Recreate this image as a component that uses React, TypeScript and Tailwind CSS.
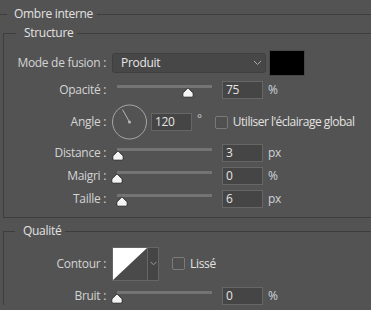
import React from "react";

const font = { fontFamily: '"Open Sans", "Noto Sans", sans-serif' };

function Thumb({ x }: { x: number }) {
  // x = centre of the thumb, relative to the slider box
  return (
    <svg
      className="absolute top-[6px]"
      style={{ left: x - 6 }}
      width="12"
      height="11"
      viewBox="0 0 12 11"
    >
      <path
        d="M6 0.8 L10.6 5.4 Q11.2 6 11.2 6.8 L11.2 9 Q11.2 10.2 10 10.2 L2 10.2 Q0.8 10.2 0.8 9 L0.8 6.8 Q0.8 6 1.4 5.4 Z"
        fill="#f4f4f4"
        stroke="#2e2e2e"
        strokeWidth="1"
      />
    </svg>
  );
}

function Slider({ pos }: { pos: number }) {
  return (
    <div className="relative h-[18px] w-[110px] shrink-0">
      <div className="absolute left-[5px] top-[4px] h-[3px] w-[95px] bg-[#747474]" />
      <Thumb x={pos} />
    </div>
  );
}

function NumBox({ value }: { value: string }) {
  return (
    <div className="h-[18px] w-[41px] shrink-0 border border-[#666666] bg-[#454545] pl-[3px] text-[12px] leading-[16px] text-[#e4e4e4]">
      {value}
    </div>
  );
}

function Label({ children }: { children: React.ReactNode }) {
  return (
    <div className="w-[103px] shrink-0 pr-[1px] text-right text-[12px] leading-[16px] text-[#d4d4d4]">
      {children}
    </div>
  );
}

function Checkbox() {
  return <div className="h-[13px] w-[13px] shrink-0 rounded-[2px] border border-[#7a7a7a] bg-[#505050]" />;
}

function SliderRow({ label, pos, value, unit }: { label: string; pos: number; value: string; unit: string }) {
  return (
    <div className="flex h-[18px] items-center">
      <Label>{label}</Label>
      <div className="ml-[5px] flex items-center">
        <Slider pos={pos} />
        <NumBox value={value} />
        <span className="ml-[5px] text-[12px] leading-[16px] text-[#d0d4d8]">{unit}</span>
      </div>
    </div>
  );
}

function Chevron() {
  return (
    <svg width="9" height="6" viewBox="0 0 9 6">
      <path d="M1 1 L4.5 4.5 L8 1" fill="none" stroke="#a8a8a8" strokeWidth="1" />
    </svg>
  );
}

// group box title: corner + label + rule running to the edge
function GroupHeader({ title, corner }: { title: string; corner: string }) {
  return (
    <div className="flex h-[16px]">
      <div className={`${corner} mt-[8px] shrink-0 border-l border-t border-[#3d3d3d]`} />
      <span className="pl-[8px] pr-[4px] text-[12px] leading-[16px] text-[#e2e2e2]">{title}</span>
      <div className="mt-[8px] h-px flex-1 bg-[#3d3d3d]" />
    </div>
  );
}

export default function App() {
  return (
    <div className="h-[310px] w-full overflow-hidden bg-[#535353] pt-[6px] tracking-[-0.3px]" style={font}>
      {/* Ombre interne */}
      <div className="flex h-[16px]">
        <div className="mt-[8px] h-px w-[7px] bg-[#3d3d3d]" />
        <span className="pl-[7px] pr-[4px] text-[12px] leading-[16px] text-[#e2e2e2]">Ombre interne</span>
        <div className="mt-[8px] h-px flex-1 bg-[#3d3d3d]" />
      </div>

      <div className="ml-[3px] mt-[3px]">
        <GroupHeader title="Structure" corner="w-[13px]" />
        <div className="flex flex-col gap-[5px] border-b border-l border-[#3d3d3d] pb-[9px] pt-[9px]">
          <div className="flex h-[26px] items-center">
            <Label>Mode de fusion :</Label>
            <div className="ml-[5px] flex h-[20px] w-[154px] items-center justify-between rounded-[3px] border border-[#3f3f3f] bg-[#474747] pl-[8px] pr-[3px] text-[12px] leading-[16px] text-[#e6e6e6]">
              <span>Produit</span>
              <Chevron />
            </div>
            <div className="ml-[3px] h-[26px] w-[36px] border border-[#474747] bg-black" />
          </div>

          <SliderRow label="Opacité :" pos={76} value="75" unit="%" />

          <div className="flex h-[36px] items-center">
            <Label>Angle :</Label>
            <div className="ml-[5px] flex items-center">
              <svg width="36" height="36" viewBox="0 0 36 36" className="shrink-0">
                <circle cx="17.5" cy="18" r="17" fill="none" stroke="#a6a6a6" strokeWidth="1" />
                <line x1="17.5" y1="18" x2="10.5" y2="5.5" stroke="#b4b4b4" strokeWidth="1" />
                <circle cx="17.5" cy="18" r="1.6" fill="#b4b4b4" />
              </svg>
              <div className="ml-[3px]">
                <NumBox value="120" />
              </div>
              <span className="-mt-[6px] ml-[5px] text-[12px] leading-[16px] text-[#c8d0d8]">°</span>
              <div className="ml-[13px]">
                <Checkbox />
              </div>
              <span className="ml-[5px] whitespace-nowrap text-[12px] leading-[16px] tracking-[-0.5px] text-[#e2e2e2]">
                Utiliser l'éclairage global
              </span>
            </div>
          </div>

          <div className="-mt-[1px]">
            <SliderRow label="Distance :" pos={6} value="3" unit="px" />
          </div>
          <SliderRow label="Maigri :" pos={5} value="0" unit="%" />
          <SliderRow label="Taille :" pos={10} value="6" unit="px" />
        </div>
      </div>

      <div className="ml-[3px] mt-[5px]">
        <GroupHeader title="Qualité" corner="w-[12px]" />
        <div className="flex flex-col gap-[6px] border-l border-[#3d3d3d] pt-[8px]">
          <div className="flex h-[33px] items-center">
            <Label>Contour :</Label>
            <div className="ml-[5px] flex h-[34px] border border-[#666666]">
              <svg width="34" height="32" viewBox="0 0 34 32" className="block">
                <rect width="34" height="32" fill="#4a4a4a" />
                <polygon points="0,0 34,0 0,32" fill="#ffffff" />
              </svg>
              <div className="flex w-[11px] items-center justify-center border-l border-[#666666] bg-[#454545]">
                <svg width="7" height="5" viewBox="0 0 7 5">
                  <path d="M0.5 0.8 L3.5 3.8 L6.5 0.8" fill="none" stroke="#9a9a9a" strokeWidth="1" />
                </svg>
              </div>
            </div>
            <div className="ml-[13px]">
              <Checkbox />
            </div>
            <span className="ml-[5px] text-[12px] leading-[16px] text-[#e2e2e2]">Lissé</span>
          </div>
          <div className="mt-[1px]">
            <SliderRow label="Bruit :" pos={5} value="0" unit="%" />
          </div>
        </div>
      </div>
    </div>
  );
}
